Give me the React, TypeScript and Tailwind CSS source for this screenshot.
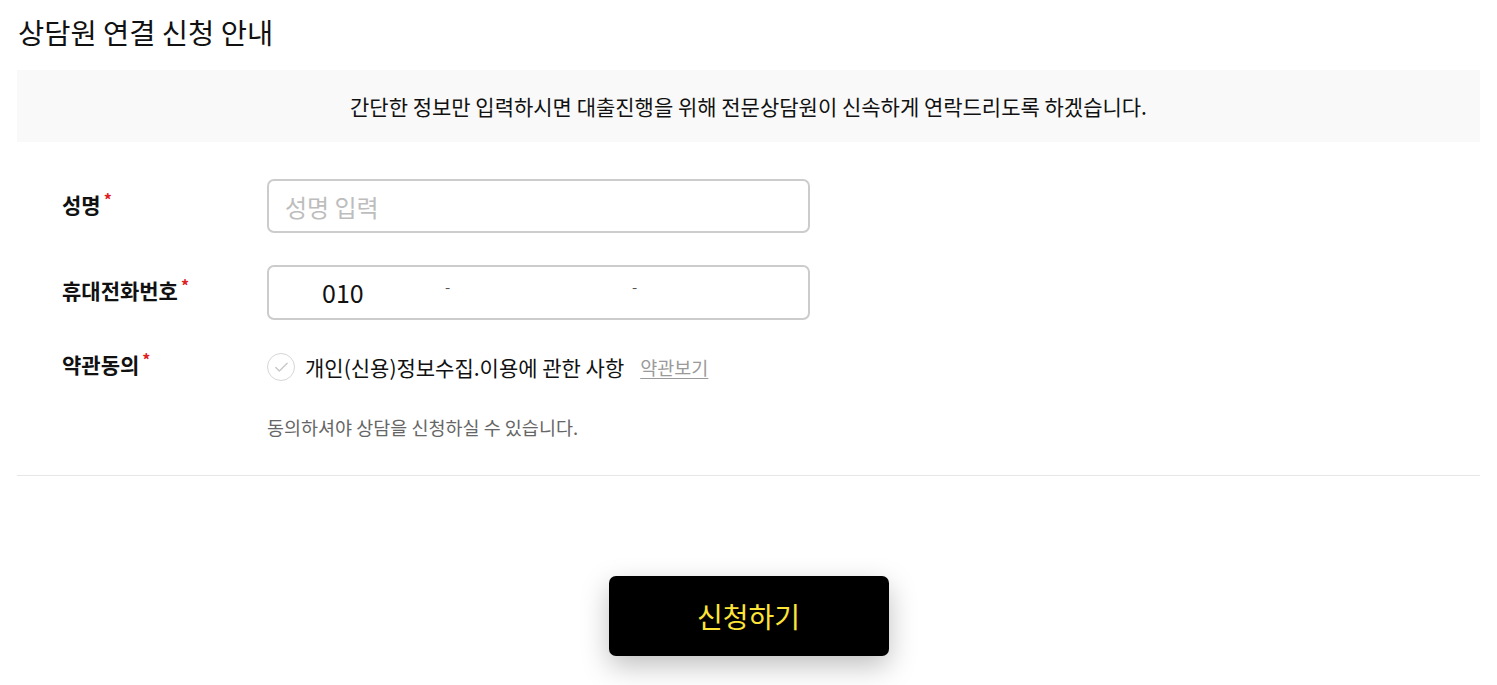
import { Check } from 'lucide-react';

const Label = ({ text }: { text: string }) => (
  <div className="w-[250px] shrink-0 pl-[45px] pt-[11px] text-[21px] font-bold text-[#111] leading-[28px]">
    {text}
    <span className="relative -top-[7px] ml-[3px] text-[16px] text-[#e02020]">*</span>
  </div>
);

export default function App() {
  return (
    <div className="min-h-[685px] bg-white px-[17px] font-['Noto_Sans_CJK_KR','Noto_Sans',sans-serif] text-[#111]">
      <h2 className="pt-[12px] pl-[1px] text-[28.5px] leading-[40px] font-normal">상담원 연결 신청 안내</h2>

      <div className="mt-[18px] flex h-[72px] items-center justify-center bg-[#f9f9f9] text-[21px] leading-[28px]">
        간단한 정보만 입력하시면 대출진행을 위해 전문상담원이 신속하게 연락드리도록 하겠습니다.
      </div>

      <div className="border-b border-[#e6e6e6] pt-[37px] pb-[35px]">
        <div className="flex">
          <Label text="성명" />
          <input
            className="h-[54px] w-[543px] rounded-[7px] border-2 border-[#cccccc] px-[16px] text-[24px] outline-none placeholder:text-[#bdbdbd]"
            placeholder="성명 입력"
          />
        </div>

        <div className="mt-[32px] flex">
          <Label text="휴대전화번호" />
          <div className="flex h-[55px] w-[543px] items-center rounded-[7px] border-2 border-[#cccccc] text-[25px]">
            <span className="w-[176px] pl-[53px]">010</span>
            <span className="-mt-[10px] w-[187px] text-[15px] text-[#555]">-</span>
            <span className="-mt-[10px] text-[15px] text-[#555]">-</span>
          </div>
        </div>

        <div className="mt-[19px] flex">
          <Label text="약관동의" />
          <div className="pt-[14px]">
            <div className="flex items-center">
              <span className="flex h-[28px] w-[28px] items-center justify-center rounded-full border border-[#d6d6d6]">
                <Check size={17} strokeWidth={2} className="text-[#c8c8c8]" />
              </span>
              <span className="ml-[10px] text-[21px] leading-[28px]">개인(신용)정보수집.이용에 관한 사항</span>
              <span className="ml-[16px] text-[18.5px] leading-[28px] text-[#9a9a9a] underline underline-offset-[3px]">약관보기</span>
            </div>
            <p className="mt-[33px] text-[18.5px] leading-[26px] text-[#666]">동의하셔야 상담을 신청하실 수 있습니다.</p>
          </div>
        </div>
      </div>

      <div className="flex justify-center pt-[100px] pb-[29px]">
        <button className="h-[80px] w-[280px] rounded-[7px] bg-black text-[28px] text-[#ffe438] shadow-[0_10px_28px_rgba(0,0,0,0.25)]">
          신청하기
        </button>
      </div>
    </div>
  );
}
